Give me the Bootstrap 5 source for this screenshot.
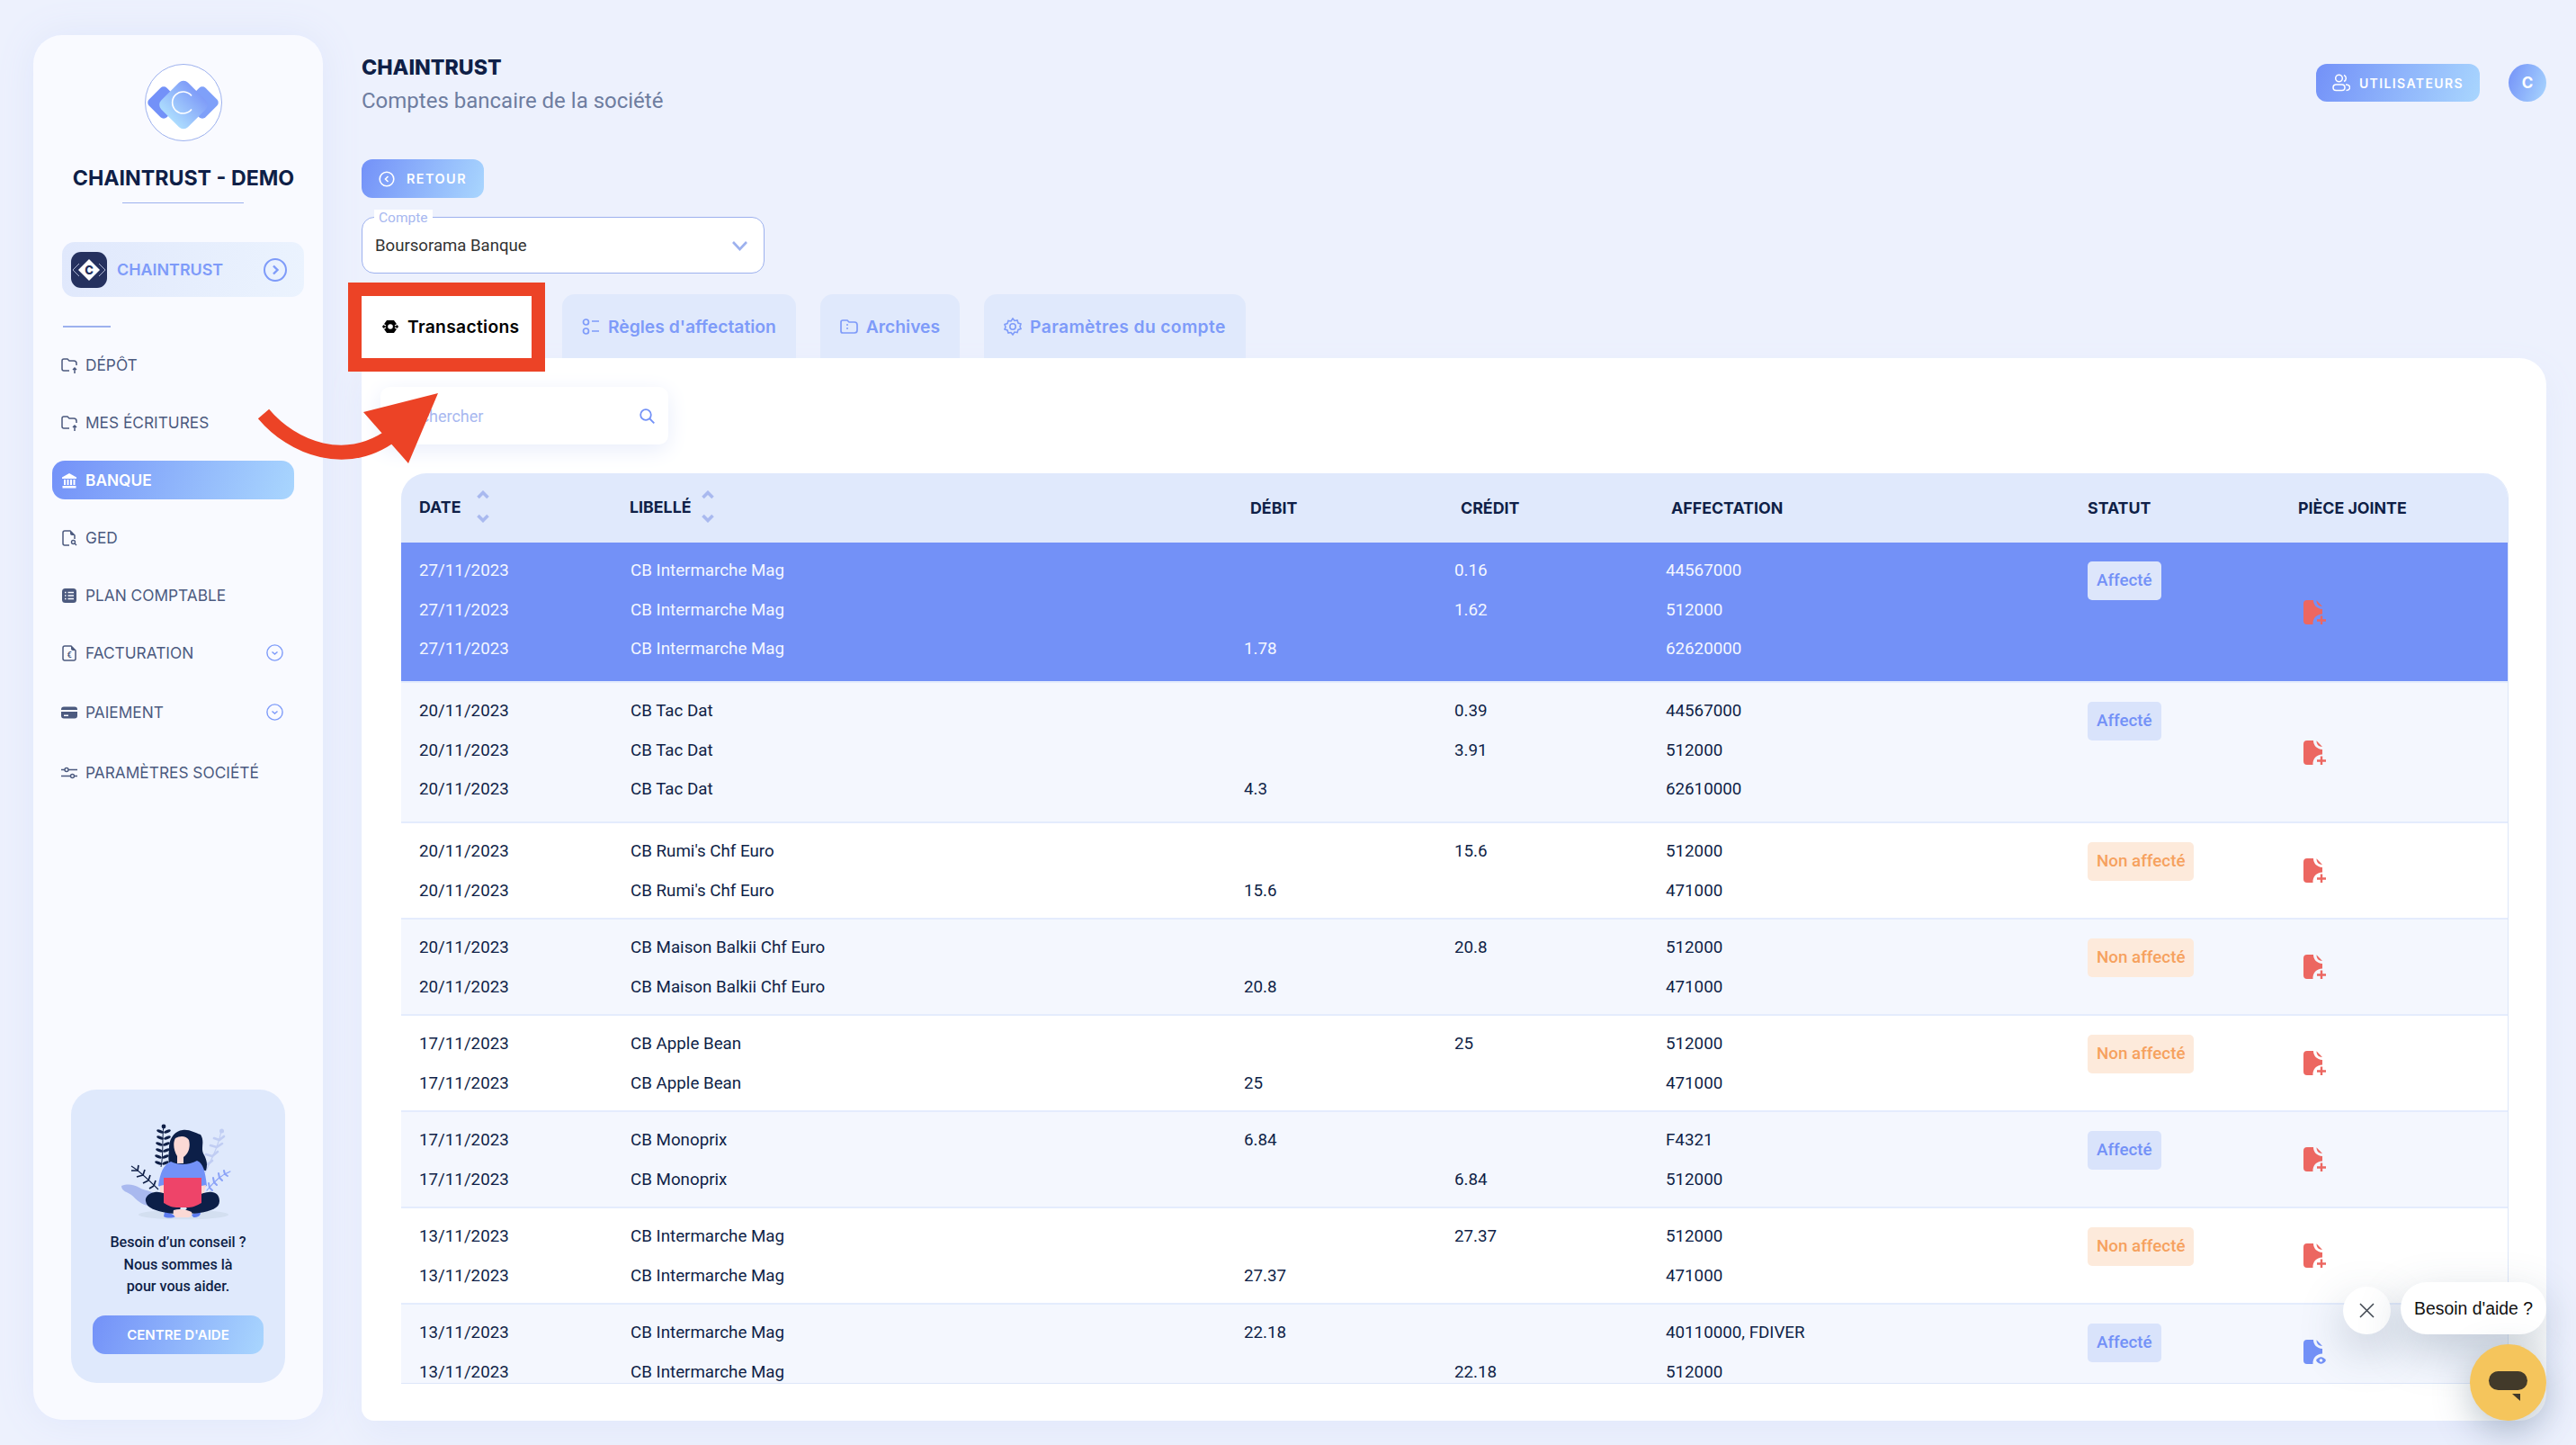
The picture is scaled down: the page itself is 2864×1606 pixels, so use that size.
<!DOCTYPE html>
<html lang="fr">
<head>
<meta charset="utf-8">
<title>Chaintrust</title>
<link rel="stylesheet" href="https://cdn.jsdelivr.net/npm/bootstrap@5.3.0/dist/css/bootstrap.min.css">
<style>
:root{--navy:#0f1f47;--blue:#7391f7;--blue2:#7e9bf9;--pale:#e0e9fc;--grad:linear-gradient(110deg,#7391f8 0%,#a9d6fe 100%);--pop:"Inter","Noto Sans",sans-serif;--rob:"Roboto","Liberation Sans",sans-serif}
html,body{height:1606px;overflow:hidden}
body{background:#edf1fd;font-family:var(--rob);color:var(--navy);position:relative;margin:0}
.app-shell{padding:39px 33px 27px 37px;height:1606px}
.side-panel{width:322px;height:1539px;background:#f9faff;border-radius:32px;padding:32px 21px 41px;box-shadow:0 0 44px #dfe6fb;flex:none}
.side-logo{width:86px;height:86px;margin-left:103px;display:block}
.side-title{font:700 23.2px/36px var(--pop);text-align:center;margin:23px 0 0;width:292px;letter-spacing:0}
.side-rule{width:135px;height:1px;background:#9db1ee;margin:9px 0 0 78px}
.org-pill{margin:43px 0 0 11px;width:269px;height:61px;border-radius:14px;background:linear-gradient(100deg,#e0e8fc,#ebf3fe);padding:0 19px 0 10px;gap:11px;font:600 17.9px var(--pop);color:var(--blue2)}
.org-pill span{flex:1}
.side-sep{width:53px;height:2px;background:#9db1ee;margin:32px 0 0 12px}
.side-nav{margin-top:20px;gap:21px}
.side-link{display:flex;align-items:center;width:269px;height:43px;padding:0 15px 0 10px;border-radius:14px;color:#4c5a7f;font:400 17.3px var(--pop);text-decoration:none;letter-spacing:0}
.side-link svg.ic{width:18px;height:18px;margin-right:9px;flex:none;color:#4c5a7f}
.side-link svg.ch{width:19px;height:19px;margin-left:auto;margin-right:-3px;color:var(--blue2)}
.side-link.is-on{background:var(--grad);color:#fff;font-weight:600}
.side-link.is-on svg.ic{color:#fff}
.nudge-a{margin-top:2px}.nudge-b{margin-top:3px}
.help-box{margin:auto 0 0 21px;width:238px;height:326px;background:#dfe9fc;border-radius:28px;padding:34px 24px 0;text-align:center}
.help-art{width:140px;height:115px;display:block;margin:0 auto}
.help-text{font:500 16.1px/24.5px var(--rob);margin:9px -10px 0}
.help-btn{display:block;width:190px;height:43px;line-height:43px;padding:0;border:0;border-radius:14px;margin:19px 0 0;background:var(--grad);color:#fff;font:600 15px/43px var(--pop)}
.main-col{margin-left:43px;width:2429px}
.page-head{margin-top:18px}
.page-title{font:800 23.2px/37px var(--pop);margin:0}
.page-sub{font:400 24px/34px var(--rob);color:#6e7da0;margin:1px 0 0}
.grad-btn{background:var(--grad);color:#fff;border:0;border-radius:12px;height:43px;padding:0;font:600 14.4px var(--pop);letter-spacing:1.5px;display:inline-flex;align-items:center;justify-content:center}
.grad-btn:hover{color:#fff}
.users-btn{width:182px;height:42px;gap:10px;font-size:14px;letter-spacing:1.4px}
.users-btn svg{width:20px;height:20px}
.avatar-dot{width:42px;height:42px;border-radius:50%;background:var(--grad);color:#fff;font:700 17px/42px var(--pop);text-align:center;margin-left:32px}
.head-tools{margin-top:14px}
.back-btn{width:136px;gap:13px;margin-top:48px}
.back-btn svg{width:18px;height:18px}
.acct-field{position:relative;width:448px;margin-top:21px}
.acct-select{height:63px;border:1px solid #9db1ee;border-radius:14px;padding:0 40px 0 14px;font:400 18.6px var(--rob);color:#333;background-position:right 18px center;background-size:17px 12px;background-image:url("data:image/svg+xml,%3csvg xmlns='http://www.w3.org/2000/svg' viewBox='0 0 17 12'%3e%3cpath fill='none' stroke='%239db1ee' stroke-width='2.6' d='M1 2l7.5 8L16 2'/%3e%3c/svg%3e")}
.acct-label{position:absolute;left:14px;top:-8px;background:#fff;padding:0 5px;font:400 15.5px/18px var(--rob);color:#a8b8f0}
.tab-row{margin-top:23px;gap:27px}
.tab-item{height:71px;background:var(--pale);border-radius:14px 14px 0 0;padding:0 22px;gap:9px;color:var(--blue2);font:600 19.3px var(--pop);display:flex;align-items:center;white-space:nowrap}
.tab-item svg{width:20px;height:20px}
.tab-item.is-on{background:#fff;color:#000;font-weight:600;border-radius:0;width:189px;margin-right:7px;padding-right:0;letter-spacing:.3px}
.tab-wide{letter-spacing:.35px}
.white-panel{background:#fff;height:1181px;border-radius:0 30px 30px 14px;box-shadow:0 16px 40px #e3e9fb;padding:32px 0 0 21px}
.find-box{width:320px;height:64px;border-radius:10px;background:#fff;box-shadow:0 6px 24px #e8edfb;padding:0 15px 0 24px;font:400 18px var(--rob);color:#a8b8f0}
.find-box span{flex:1}
.find-box svg{width:17px;height:17px}
.table-clip{margin:32px 0 0 23px;width:2343px;height:1012px;overflow:hidden;border-radius:28px 28px 0 0;border-bottom:1px solid #dde7f9;border-right:1px solid #dde7f9}
.tx-table{table-layout:fixed;width:2343px;margin:0;--bs-table-bg:transparent;border-collapse:separate;border-spacing:0;font:400 18.75px/43.5px var(--rob);color:var(--navy)}
.tx-table th{background:var(--pale);height:77px;padding:0 0 0 20px;border:0;vertical-align:middle;font:700 17.8px var(--pop);color:var(--navy);white-space:nowrap}
.tx-table th svg{width:14px;height:36px;margin-left:18px;vertical-align:middle;position:relative;top:-2px}
.tx-table td{padding:10px 0 8px 20px;border-bottom:2px solid #e4ecfd;vertical-align:top;box-shadow:none;color:inherit;white-space:nowrap}
.tx-table td.mid{vertical-align:middle;padding:0 0 0 26px}
.tx-table td.mid svg{width:25px;height:27px;display:block}
.tx-table th.sh7{padding-left:27px}.tx-table th.sh26{padding-left:26px}
.tx-table th.sh19{padding-left:19px}
.tx-table th.sh19 svg{margin-left:11px}
.row-tall{height:156px}
.row-sel{background:var(--blue);color:#f4f7ff}
.row-alt{background:#f4f7fe}
.row-plain{background:#fff}
.tx-table td.badge-cell{padding-top:21px;line-height:1}
.st-chip{display:inline-block;height:43px;line-height:43px;border-radius:5px;padding:0 10px;font:500 18.8px/43px var(--rob)}
.st-ok{background:#d9e3fb;color:var(--blue)}
.row-sel .st-ok{background:#dde6fb}
.st-no{background:#fdeadb;color:#f6a15e}
.callout-box{position:absolute;left:387px;top:314px;width:219px;height:99px;border:15px solid #ec4326;z-index:5;pointer-events:none}
.callout-arrow{position:absolute;left:270px;top:420px;width:240px;height:110px;z-index:6;pointer-events:none}
.chat-text{position:absolute;left:2669px;top:1425px;width:162px;height:58px;border-radius:29px;background:#fff;color:#111;font:400 19.4px/58px "Liberation Sans",sans-serif;text-align:center;box-shadow:0 18px 50px rgba(60,85,110,.28);z-index:7}
.chat-close{position:absolute;left:2605px;top:1430px;width:53px;height:53px;border-radius:50%;background:#fff;box-shadow:0 18px 50px rgba(60,85,110,.28);z-index:7}
.chat-close svg{width:53px;height:53px;display:block}
.chat-fab{position:absolute;left:2746px;top:1494px;width:85px;height:85px;border-radius:50%;background:#f5c55c;box-shadow:0 12px 40px rgba(60,85,110,.35);z-index:7}
.chat-fab svg{width:85px;height:85px;display:block}
</style>
</head>
<body>
<svg width="0" height="0" class="d-block position-absolute">
<defs>
<symbol id="file-add" viewBox="0 0 25 27"><path fill="#ec6761" d="M4 0h7c0 5.500 4 9.500 10 10v5.500c-6.500 0-11 5-10.500 11.500H4a4 4 0 0 1-4-4V4a4 4 0 0 1 4-4z"/><path fill="#ec6761" d="M14.500 .3l6.500 6.700c-4 0-6.500-2.500-6.500-6.700z"/><path stroke="#ec6761" stroke-width="2.400" d="M20 17.500v9.500M15 22.500h10"/></symbol>
<symbol id="file-eye" viewBox="0 0 25 27"><path fill="#7391f7" d="M4 0h7c0 5.500 4 9.500 10 10v5.500c-6.500 0-11 5-10.500 11.500H4a4 4 0 0 1-4-4V4a4 4 0 0 1 4-4z"/><path fill="#7391f7" d="M14.500 .3l6.500 6.700c-4 0-6.500-2.500-6.500-6.700z"/><path fill="#7391f7" d="M14 23c3-5 8-5 11 0-3 5-8 5-11 0z"/><circle cx="19.500" cy="23" r="1.800" fill="#f4f7fe"/></symbol>
<symbol id="sort" viewBox="0 0 14 36"><path fill="none" stroke="#a9b9ef" stroke-width="3.600" d="M1.500 8l5.500-5.500L12.500 8M1.500 28l5.500 5.500 5.500-5.500"/></symbol>
<symbol id="folder-up" viewBox="0 0 18 18"><path fill="none" stroke="currentColor" stroke-width="1.500" d="M9 15H3a2 2 0 0 1-2-2V4a2 2 0 0 1 2-2h4l2 2h5a3 3 0 0 1 3 3v2"/><path fill="none" stroke="currentColor" stroke-width="1.500" d="M15 18v-6M13 14l2-2 2 2"/></symbol>
<symbol id="round-down" viewBox="0 0 19 19"><circle cx="9.500" cy="9.500" r="8.600" fill="none" stroke="currentColor" stroke-width="1.400"/><path fill="none" stroke="currentColor" stroke-width="1.500" d="M6.500 8.500l3 2.500 3-2.500"/></symbol>
</defs>
</svg>

<div class="app-shell d-flex">
  <aside class="side-panel d-flex flex-column">
    <svg class="side-logo" viewBox="0 0 86 86">
      <defs><linearGradient id="lg1" x1="0" y1="0" x2="0" y2="1"><stop offset="0" stop-color="#7f9cf8"/><stop offset="1" stop-color="#acdcfe"/></linearGradient></defs>
      <circle cx="43" cy="43" r="42.500" fill="#fff" stroke="#9db1ee"/>
      <rect x="7" y="29" width="28" height="28" rx="5" fill="#7391f8" transform="rotate(45 21 43)"/>
      <rect x="50" y="29" width="28" height="28" rx="5" fill="#7fa0f9" transform="rotate(45 64 43)"/>
      <rect x="22" y="24.500" width="42" height="42" rx="7" fill="url(#lg1)" transform="rotate(45 43 45.500)"/>
      <path fill="none" stroke="#fff" stroke-width="1.600" d="M52 35.500a12 12 0 1 0 0 15"/>
    </svg>
    <h1 class="side-title">CHAINTRUST - DEMO</h1>
    <div class="side-rule"></div>
    <div class="org-pill d-flex align-items-center">
      <svg width="40" height="40" viewBox="0 0 40 40" class="flex-none"><rect width="40" height="40" rx="11" fill="#25315f"/><path fill="none" stroke="#cfd6ee" stroke-width=".8" d="M9 13l-7 7 7 7M31 13l7 7-7 7"/><path fill="#fff" d="M20 8l12 12-12 12L8 20z"/><text x="20" y="25" font-family="Inter,sans-serif" font-size="13" font-weight="800" text-anchor="middle" fill="#25315f">C</text></svg>
      <span>CHAINTRUST</span>
      <svg width="26" height="26" viewBox="0 0 26 26"><circle cx="13" cy="13" r="12" fill="none" stroke="#7e9bf9" stroke-width="2"/><path fill="none" stroke="#7e9bf9" stroke-width="2.400" d="M11 8.500l4.500 4.500-4.500 4.500"/></svg>
    </div>
    <div class="side-sep"></div>
    <nav class="side-nav nav flex-column">
      <a class="side-link" href="#"><svg class="ic"><use href="#folder-up"/></svg>DÉPÔT</a>
      <a class="side-link" href="#"><svg class="ic"><use href="#folder-up"/></svg>MES ÉCRITURES</a>
      <a class="side-link is-on" href="#"><svg class="ic" viewBox="0 0 18 18"><path fill="currentColor" d="M9 1l8 4.500v1.500H1V5.500zM1.500 15h15v2.500h-15zM3 8h2v6H3zM6.500 8h2v6h-2zM10 8h2v6h-2zM13.500 8h2v6h-2z"/></svg>BANQUE</a>
      <a class="side-link" href="#"><svg class="ic" viewBox="0 0 18 18"><path fill="none" stroke="currentColor" stroke-width="1.500" d="M9 17H4a2 2 0 0 1-2-2V3a2 2 0 0 1 2-2h6l5 5v4"/><path fill="currentColor" d="M10 1v3a2 2 0 0 0 2 2h3z"/><circle cx="13.500" cy="13.500" r="2" fill="none" stroke="currentColor" stroke-width="1.400"/><path stroke="currentColor" stroke-width="1.400" d="M15 15l2 2"/></svg>GED</a>
      <a class="side-link" href="#"><svg class="ic" viewBox="0 0 18 18"><rect x="1" y="1" width="16" height="16" rx="3.500" fill="currentColor"/><path stroke="#f9faff" stroke-width="1.600" d="M4 5.500h1.500M7.500 5.500H14M4 9h1.500M7.500 9H14M4 12.500h1.500M7.500 12.500H14"/></svg>PLAN COMPTABLE</a>
      <a class="side-link" href="#"><svg class="ic" viewBox="0 0 18 18"><path fill="none" stroke="currentColor" stroke-width="1.500" d="M11 1H4a2 2 0 0 0-2 2v12a2 2 0 0 0 2 2h10a2 2 0 0 0 2-2V6z"/><path fill="currentColor" d="M11 1v3a2 2 0 0 0 2 2h3z"/><text x="9" y="14" font-family="Roboto,sans-serif" font-size="9" font-weight="700" fill="currentColor" text-anchor="middle">€</text></svg>FACTURATION<svg class="ch"><use href="#round-down"/></svg></a>
      <a class="side-link nudge-a" href="#"><svg class="ic" viewBox="0 0 18 18"><path fill="currentColor" d="M3 2.500h12a3 3 0 0 1 3 3V6H0v-.5a3 3 0 0 1 3-3zM0 8h18v4.500a3 3 0 0 1-3 3H3a3 3 0 0 1-3-3zm3 3.500v1.500h5v-1.500z" fill-rule="evenodd"/></svg>PAIEMENT<svg class="ch"><use href="#round-down"/></svg></a>
      <a class="side-link nudge-b" href="#"><svg class="ic" viewBox="0 0 18 18"><path stroke="currentColor" stroke-width="1.500" d="M0 5.500h18M0 12.500h18"/><circle cx="6" cy="5.500" r="2" fill="#f9faff" stroke="currentColor" stroke-width="1.400"/><circle cx="12.500" cy="12.500" r="2" fill="#f9faff" stroke="currentColor" stroke-width="1.400"/></svg>PARAMÈTRES SOCIÉTÉ</a>
    </nav>
    <div class="help-box">
      <svg class="help-art" viewBox="0 0 140 115">
        <defs>
          <g id="leafd"><ellipse cx="-4" cy="-1.500" rx="4" ry="1.700" transform="rotate(22 -4 -1.500)"/><ellipse cx="4" cy="-1.500" rx="4" ry="1.700" transform="rotate(-22 4 -1.500)"/></g>
        </defs>
        <ellipse cx="76" cy="105" rx="50" ry="5.300" fill="#d3dff0"/>
        <path fill="#a9b9ef" d="M7 73c8-3 14-1 20 2 6 4 12 2 18 8 5 5 3 11-5 12-10 1-16-7-22-12-4-3-11-4-11-10z"/>
        <g fill="#0f1f47" stroke="#0f1f47">
          <path fill="none" stroke-width="1" d="M54 6c-2 14 0 30-3 46"/>
          <circle cx="54" cy="7" r="2.400" stroke="none"/>
          <g stroke="none">
            <use href="#leafd" x="54" y="14"/><use href="#leafd" x="54" y="21"/><use href="#leafd" x="53" y="28"/><use href="#leafd" x="53" y="35"/><use href="#leafd" x="52" y="42"/><use href="#leafd" x="52" y="49"/>
          </g>
          <path fill="none" stroke-width="1.200" d="M18 51c10 6 20 16 30 26"/>
          <g stroke-width="1.700" fill="none"><path d="M25 56l-7 0M25 56l1-6M31 61l-7 2M31 61l2-6M37 67l-6 3M37 67l2-6M43 73l-5 3M43 73l2-6"/></g>
        </g>
        <g stroke="#c0cdf3" fill="#c0cdf3">
          <path fill="none" stroke-width="1.200" d="M118 12c-3 16-10 30-18 46"/>
          <circle cx="118.500" cy="12" r="2.500" stroke="none"/>
          <g fill="none" stroke-width="2.600" stroke-linecap="round"><path d="M116 22l-6-2M116 22l5-4M113 30l-7-2M113 30l6-4M108 40l-7-2M108 40l6-5M103 49l-5-2M103 49l5-4"/></g>
        </g>
        <g stroke="#8aa2f7" fill="none" stroke-width="2" stroke-linecap="round"><path d="M128 57c-9 3-18 11-26 21" stroke-width="1.200"/><path d="M122 60l3 2M122 60l-1-4M116 64l3 3M116 64l-1-5M110 69l3 3M110 69l-1-5M105 75l3 3M105 75l-1-5"/></g>
        <path fill="#0c1f48" d="M75 11c8-1 13 3 20 5 5 8 0 14 3 21 4 7 5 12 3 19l-40-4c-3-12-1-13-1-22 0-9 6-18 15-19z"/>
        <path fill="#fbd9d5" d="M67 20c5-3 12-3 15 2 2 7 0 15-6 19v7h-7v-8c-4-6-5-15-2-20z"/>
        <path fill="#7391f7" d="M62 46c8 4 20 4 29-1 7 3 9 11 11 28l-7 2v12H55V75l-7-2c2-15 6-24 14-27z"/>
        <path fill="#fbd9d5" d="M50 73l4-1 1 17-5-6zM96 73l5-1-3 12-3 4z"/>
        <path fill="#5d7cf0" d="M55 102c4 0 9 2 12 5-3 2-10 2-13 0zM85 105c3-2 7-2 10-2 0 3-3 5-8 5z"/>
        <path fill="#0c1f48" d="M44 80c10-2 24 8 36 18-3 4-13 7-22 5-12-2-23-5-24-13-1-5 4-9 10-10zM108 80c-10-2-24 8-36 18 3 4 13 7 22 5 12-2 22-5 22-13 0-5-2-9-8-10z"/>
        <path fill="#fbd9d5" d="M65 100c6-2 14-1 20 2 1 3 0 5-3 6H68c-3-1-4-5-3-8z"/>
        <path fill="#ee4469" d="M54 64h42v28c-4 2-9 5-14 5H68c-6 0-10-3-14-5z"/>
      </svg>
      <p class="help-text">Besoin d’un conseil ?<br>Nous sommes là<br>pour vous aider.</p>
      <button class="help-btn btn" type="button">CENTRE D'AIDE</button>
    </div>
  </aside>

  <main class="main-col">
    <header class="page-head d-flex justify-content-between align-items-start">
      <div>
        <h2 class="page-title">CHAINTRUST</h2>
        <p class="page-sub">Comptes bancaire de la société</p>
      </div>
      <div class="head-tools d-flex align-items-center">
        <button class="btn grad-btn users-btn" type="button"><svg viewBox="0 0 20 20" fill="none" stroke="#fff" stroke-width="1.500"><circle cx="7.500" cy="5" r="3.800"/><path d="M13 1.500a3.800 3.800 0 0 1 0 7"/><rect x="1" y="12" width="13" height="6.500" rx="3.250"/><path d="M15 12c3 .2 4.500 1.500 4.500 3.200S18 18.300 15.500 18.500"/></svg>UTILISATEURS</button>
        <div class="avatar-dot">C</div>
      </div>
    </header>

    <button class="btn grad-btn back-btn" type="button"><svg viewBox="0 0 18 18" fill="none" stroke="#fff" stroke-width="1.600"><circle cx="9" cy="9" r="7.800"/><path d="M10.500 6l-3 3 3 3"/></svg>RETOUR</button>

    <div class="acct-field">
      <select class="form-select acct-select" aria-label="Compte"><option>Boursorama Banque</option></select>
      <label class="acct-label">Compte</label>
    </div>

    <div class="tab-row d-flex">
      <div class="tab-item is-on"><svg viewBox="0 0 20 20"><path fill="#000" d="M6 3h8l5 7-5 7H6l-5-7z"/><circle cx="10" cy="10" r="2.800" fill="#fff"/><path stroke="#fff" stroke-width="1.200" d="M0 6l5 3M20 6l-5 3M0 14l5-3M20 14l-5-3"/></svg>Transactions</div>
      <div class="tab-item"><svg viewBox="0 0 20 20" fill="none" stroke="#7e9bf9" stroke-width="1.700"><circle cx="4.500" cy="5" r="3"/><circle cx="4.500" cy="15" r="3"/><path d="M11 4h8M11 15h8"/></svg>Règles d'affectation</div>
      <div class="tab-item"><svg viewBox="0 0 20 20" fill="none" stroke="#7e9bf9" stroke-width="1.700"><path d="M3 3h5l2 2h6a3 3 0 0 1 3 3v6a3 3 0 0 1-3 3H3a2 2 0 0 1-2-2V5a2 2 0 0 1 2-2z"/><path d="M7 8h2M7 12h2"/></svg>Archives</div>
      <div class="tab-item tab-wide"><svg viewBox="0 0 20 20" fill="none" stroke="#7e9bf9" stroke-width="1.600"><path d="M10 1l2 2.500 3-.5 1 3 3 1-1 3 1 2.500-3 1-1 3-3-.5L10 19l-2-2.500-3 .5-1-3-3-1 1-2.500-1-3 3-1 1-3 3 .5z"/><circle cx="10" cy="10" r="3.200"/></svg>Paramètres du compte</div>
    </div>

    <section class="white-panel">
      <div class="find-box d-flex align-items-center"><span>Rechercher</span><svg viewBox="0 0 17 17" fill="none" stroke="#7391f7" stroke-width="1.800"><circle cx="7" cy="7" r="5.800"/><path d="M11 11l5.300 5.300"/></svg></div>
      <div class="table-clip">
        <table class="table tx-table">
          <colgroup><col style="width:235px"><col style="width:682px"><col style="width:234px"><col style="width:235px"><col style="width:469px"><col style="width:234px"><col></colgroup>
          <thead>
            <tr>
              <th>DATE<svg><use href="#sort"/></svg></th>
              <th class="sh19">LIBELLÉ<svg><use href="#sort"/></svg></th>
              <th class="sh7">DÉBIT</th>
              <th class="sh7">CRÉDIT</th>
              <th class="sh26">AFFECTATION</th>
              <th>STATUT</th>
              <th>PIÈCE JOINTE</th>
            </tr>
          </thead>
          <tbody>
            <tr class="row-sel row-tall">
              <td><div>27/11/2023</div><div>27/11/2023</div><div>27/11/2023</div></td>
              <td><div>CB Intermarche Mag</div><div>CB Intermarche Mag</div><div>CB Intermarche Mag</div></td>
              <td><div>&nbsp;</div><div>&nbsp;</div><div>1.78</div></td>
              <td><div>0.16</div><div>1.62</div><div>&nbsp;</div></td>
              <td><div>44567000</div><div>512000</div><div>62620000</div></td>
              <td class="badge-cell"><span class="st-chip st-ok">Affecté</span></td>
              <td class="mid"><svg><use href="#file-add"/></svg></td>
            </tr>
            <tr class="row-alt row-tall">
              <td><div>20/11/2023</div><div>20/11/2023</div><div>20/11/2023</div></td>
              <td><div>CB Tac Dat</div><div>CB Tac Dat</div><div>CB Tac Dat</div></td>
              <td><div>&nbsp;</div><div>&nbsp;</div><div>4.3</div></td>
              <td><div>0.39</div><div>3.91</div><div>&nbsp;</div></td>
              <td><div>44567000</div><div>512000</div><div>62610000</div></td>
              <td class="badge-cell"><span class="st-chip st-ok">Affecté</span></td>
              <td class="mid"><svg><use href="#file-add"/></svg></td>
            </tr>
            <tr class="row-plain">
              <td><div>20/11/2023</div><div>20/11/2023</div></td>
              <td><div>CB Rumi's Chf Euro</div><div>CB Rumi's Chf Euro</div></td>
              <td><div>&nbsp;</div><div>15.6</div></td>
              <td><div>15.6</div><div>&nbsp;</div></td>
              <td><div>512000</div><div>471000</div></td>
              <td class="badge-cell"><span class="st-chip st-no">Non affecté</span></td>
              <td class="mid"><svg><use href="#file-add"/></svg></td>
            </tr>
            <tr class="row-alt">
              <td><div>20/11/2023</div><div>20/11/2023</div></td>
              <td><div>CB Maison Balkii Chf Euro</div><div>CB Maison Balkii Chf Euro</div></td>
              <td><div>&nbsp;</div><div>20.8</div></td>
              <td><div>20.8</div><div>&nbsp;</div></td>
              <td><div>512000</div><div>471000</div></td>
              <td class="badge-cell"><span class="st-chip st-no">Non affecté</span></td>
              <td class="mid"><svg><use href="#file-add"/></svg></td>
            </tr>
            <tr class="row-plain">
              <td><div>17/11/2023</div><div>17/11/2023</div></td>
              <td><div>CB Apple Bean</div><div>CB Apple Bean</div></td>
              <td><div>&nbsp;</div><div>25</div></td>
              <td><div>25</div><div>&nbsp;</div></td>
              <td><div>512000</div><div>471000</div></td>
              <td class="badge-cell"><span class="st-chip st-no">Non affecté</span></td>
              <td class="mid"><svg><use href="#file-add"/></svg></td>
            </tr>
            <tr class="row-alt">
              <td><div>17/11/2023</div><div>17/11/2023</div></td>
              <td><div>CB Monoprix</div><div>CB Monoprix</div></td>
              <td><div>6.84</div><div>&nbsp;</div></td>
              <td><div>&nbsp;</div><div>6.84</div></td>
              <td><div>F4321</div><div>512000</div></td>
              <td class="badge-cell"><span class="st-chip st-ok">Affecté</span></td>
              <td class="mid"><svg><use href="#file-add"/></svg></td>
            </tr>
            <tr class="row-plain">
              <td><div>13/11/2023</div><div>13/11/2023</div></td>
              <td><div>CB Intermarche Mag</div><div>CB Intermarche Mag</div></td>
              <td><div>&nbsp;</div><div>27.37</div></td>
              <td><div>27.37</div><div>&nbsp;</div></td>
              <td><div>512000</div><div>471000</div></td>
              <td class="badge-cell"><span class="st-chip st-no">Non affecté</span></td>
              <td class="mid"><svg><use href="#file-add"/></svg></td>
            </tr>
            <tr class="row-alt">
              <td><div>13/11/2023</div><div>13/11/2023</div></td>
              <td><div>CB Intermarche Mag</div><div>CB Intermarche Mag</div></td>
              <td><div>22.18</div><div>&nbsp;</div></td>
              <td><div>&nbsp;</div><div>22.18</div></td>
              <td><div>40110000, FDIVER</div><div>512000</div></td>
              <td class="badge-cell"><span class="st-chip st-ok">Affecté</span></td>
              <td class="mid"><svg><use href="#file-eye"/></svg></td>
            </tr>
          </tbody>
        </table>
      </div>
    </section>
  </main>
</div>

<div class="callout-box"></div>
<svg class="callout-arrow" viewBox="0 0 240 110">
  <path fill="none" stroke="#ec4326" stroke-width="16" d="M23 40C55 78 115 102 168 62"/>
  <path fill="#ec4326" d="M217 17L134 38l50 57z"/>
</svg>

<div class="chat-close"><svg viewBox="0 0 53 53"><path fill="none" stroke="#3f4650" stroke-width="1.500" d="M19 19l15 15M34 19L19 34"/></svg></div>
<div class="chat-text">Besoin d'aide ?</div>
<div class="chat-fab"><svg viewBox="0 0 85 85"><rect x="21" y="30" width="43" height="21" rx="10.500" fill="#423a2a"/><path fill="#423a2a" d="M47 55h9v8z"/></svg></div>

<script src="https://cdn.jsdelivr.net/npm/bootstrap@5.3.0/dist/js/bootstrap.bundle.min.js"></script>
</body>
</html>
